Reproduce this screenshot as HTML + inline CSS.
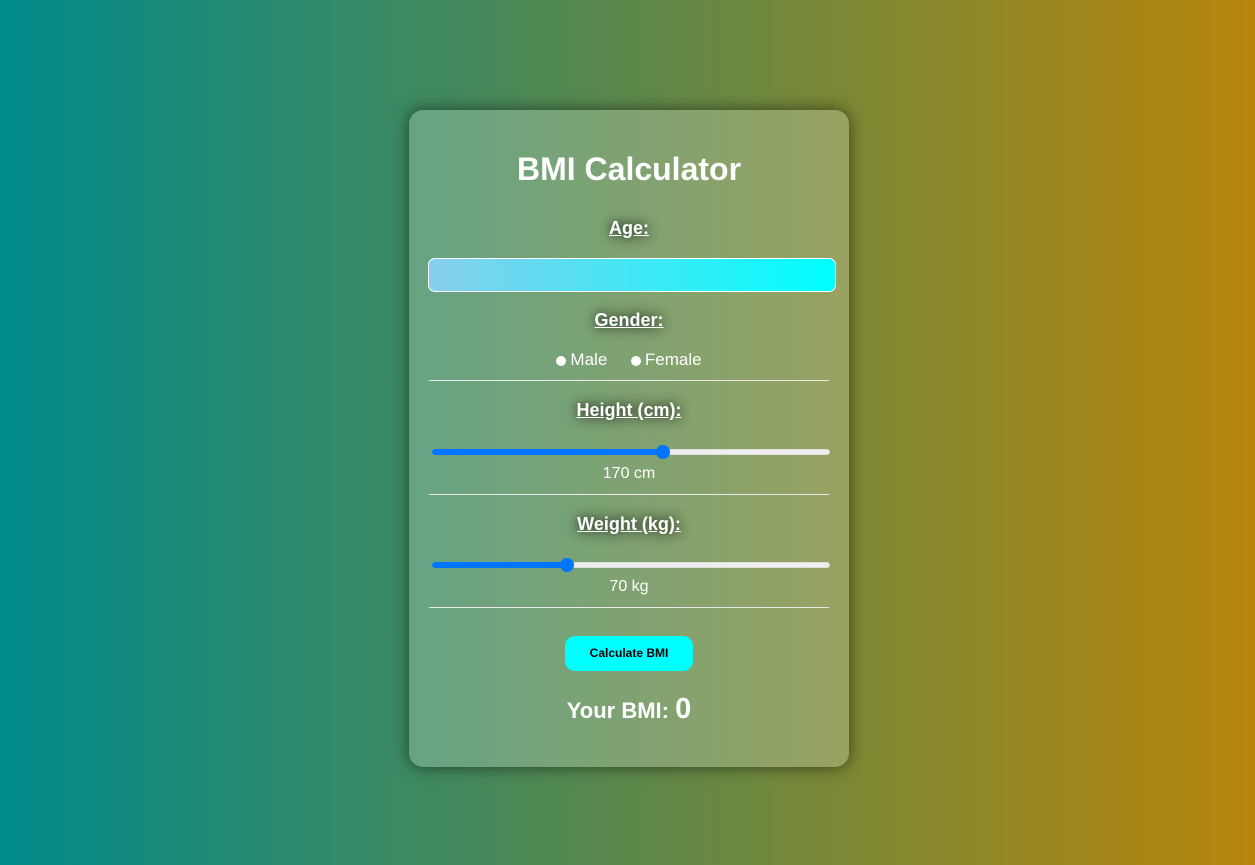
<!DOCTYPE html><html><head><style>
body{margin:0;width:1255px;height:865px;background:linear-gradient(to right,#008b8b,#b8860b);font-family:"Liberation Sans",sans-serif;position:relative;overflow:hidden;color:#fff}
.card{position:absolute;left:409px;top:110px;width:440px;height:657px;border-radius:14px;background:rgba(255,255,255,0.22);box-shadow:0 0 16px rgba(0,0,0,0.55)}
.a{position:absolute;left:0;width:440px;text-align:center}
.lbl{font-weight:bold;font-size:18px;text-decoration:underline;text-shadow:0 0 10px rgba(0,0,0,0.7),0 0 18px rgba(0,0,0,0.35)}
.hr{position:absolute;left:20px;width:400px;height:1px;background:#e8e8e8}
.trk{position:absolute;left:23px;width:398px;height:6px;border-radius:3px;background:#eee;box-shadow:inset 0 0 1px #888}
.fill{position:absolute;left:0;top:0;height:6px;border-radius:3px;background:#0075ff}
.th{position:absolute;top:-4px;width:14px;height:14px;border-radius:50%;background:#0075ff}
.dot{display:inline-block;width:10px;height:10px;border-radius:50%;background:#fff;vertical-align:-1px;margin-right:4px}
</style></head><body><div class="card">
<div class="a" style="top:41px;font-size:32px;font-weight:bold">BMI Calculator</div>
<div class="a lbl" style="top:108px">Age:</div>
<div style="position:absolute;left:19px;top:148px;width:406px;height:32px;border:1px solid #fff;border-radius:7px;background:linear-gradient(to right,#87ceeb,#00ffff)"></div>
<div class="a lbl" style="top:200px">Gender:</div>
<div class="a" style="top:240px;font-size:17px"><span class="dot"></span>Male &nbsp;&nbsp;&nbsp;&nbsp;<span class="dot"></span>Female</div>
<div class="hr" style="top:270px"></div>
<div class="a lbl" style="top:290px">Height (cm):</div>
<div class="trk" style="top:339px"><div class="fill" style="width:231px"></div><div class="th" style="left:224px"></div></div>
<div class="a" style="top:355px;font-size:16px">170 cm</div>
<div class="hr" style="top:384px"></div>
<div class="a lbl" style="top:404px">Weight (kg):</div>
<div class="trk" style="top:452px"><div class="fill" style="width:135px"></div><div class="th" style="left:128px"></div></div>
<div class="a" style="top:468px;font-size:16px">70 kg</div>
<div class="hr" style="top:497px"></div>
<div style="position:absolute;left:156px;top:526px;width:128px;height:35px;border-radius:10px;background:#0ff;color:#000;font-size:12px;font-weight:bold;text-align:center;line-height:35px">Calculate BMI</div>
<div class="a" style="top:583px;font-size:22px;font-weight:bold">Your BMI: <span style="font-size:29px">0</span></div>
</div></body></html>
